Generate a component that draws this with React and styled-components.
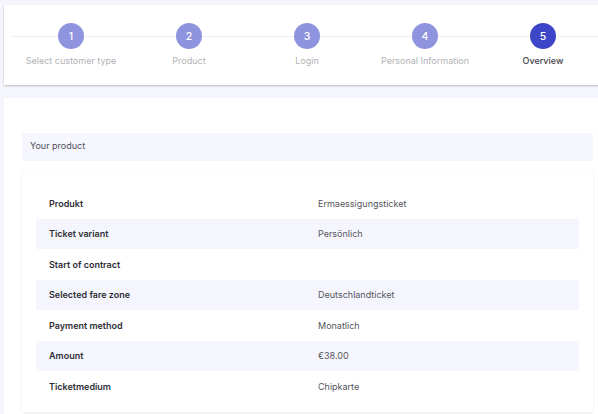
import React from 'react'
import styled, { createGlobalStyle } from 'styled-components'

const GlobalStyle = createGlobalStyle`
  html, body {
    margin: 0;
    padding: 0;
    background: #f5f6fd;
    font-family: Inter, "Noto Sans", "Liberation Sans", sans-serif;
    overflow: hidden;
  }
`

const steps = [
  'Select customer type',
  'Product',
  'Login',
  'Personal Information',
  'Overview',
]

const rows = [
  ['Produkt', 'Ermaessigungsticket'],
  ['Ticket variant', 'Persönlich'],
  ['Start of contract', ''],
  ['Selected fare zone', 'Deutschlandticket'],
  ['Payment method', 'Monatlich'],
  ['Amount', '€38.00'],
  ['Ticketmedium', 'Chipkarte'],
]

const App = () => {
  return (
    <Page>
      <GlobalStyle />
      <StepperCard>
        <Stepper>
          {steps.map((label, i) => (
            <Step key={label}>
              <Circle active={i === 4}>{i + 1}</Circle>
              <StepLabel active={i === 4}>{label}</StepLabel>
            </Step>
          ))}
        </Stepper>
      </StepperCard>
      <ContentCard>
        <SectionHeader>Your product</SectionHeader>
        <TableCard>
          {rows.map(([label, value], i) => (
            <Row key={label} striped={i % 2 === 1}>
              <Label>{label}</Label>
              <Value>{value}</Value>
            </Row>
          ))}
        </TableCard>
      </ContentCard>
    </Page>
  )
}

export default App

const Page = styled.div`
  width: 606px;
  height: 414px;
  padding: 5px 0 0 4px;
  box-sizing: border-box;
  display: flex;
  flex-direction: column;
  gap: 13px;
`

const StepperCard = styled.div`
  background: #fff;
  height: 80px;
  flex-shrink: 0;
  padding: 0 0 0 8px;
  box-sizing: border-box;
  box-shadow: 0 1px 2px rgba(0, 0, 0, 0.25);
`

const Stepper = styled.div`
  display: grid;
  grid-template-columns: repeat(5, 118px);
  padding-top: 18px;
  position: relative;

  &::before {
    content: '';
    position: absolute;
    left: 0;
    right: 0;
    top: 31px;
    height: 1px;
    background: #ededf2;
  }
`

const Step = styled.div`
  display: flex;
  flex-direction: column;
  align-items: center;
  position: relative;
`

const Circle = styled.div`
  width: 26px;
  height: 26px;
  border-radius: 50%;
  background: ${(p) => (p.active ? '#3d46c6' : '#8e94de')};
  color: #fff;
  font-size: 10.5px;
  font-weight: 500;
  display: flex;
  align-items: center;
  justify-content: center;
`

const StepLabel = styled.div`
  margin-top: 6px;
  font-size: 9px;
  line-height: 12px;
  white-space: nowrap;
  color: ${(p) => (p.active ? '#444448' : '#b2b2b6')};
  font-weight: ${(p) => (p.active ? 500 : 400)};
`

const ContentCard = styled.div`
  background: #fff;
  flex: 1;
  overflow: hidden;
  padding: 35px 13px 0 18px;
  display: flex;
  flex-direction: column;
  gap: 9px;
`

const SectionHeader = styled.div`
  background: #f5f6fe;
  height: 28px;
  flex-shrink: 0;
  padding: 0 0 3px 8px;
  box-sizing: border-box;
  display: flex;
  align-items: center;
  font-size: 9px;
  color: #505058;
`

const TableCard = styled.div`
  background: #fff;
  padding: 18px 14px 10px;
  box-shadow: 0 1px 3px rgba(0, 0, 0, 0.09);
  border-radius: 2px;
  margin-bottom: 3px;
`

const Row = styled.div`
  display: grid;
  grid-template-columns: 269px 1fr;
  height: 30.5px;
  align-items: center;
  padding-left: 13px;
  background: ${(p) => (p.striped ? '#f5f6fd' : '#fff')};
  font-size: 9px;
`

const Label = styled.div`
  font-weight: 600;
  color: #2e2e34;
`

const Value = styled.div`
  color: #55555c;
`
